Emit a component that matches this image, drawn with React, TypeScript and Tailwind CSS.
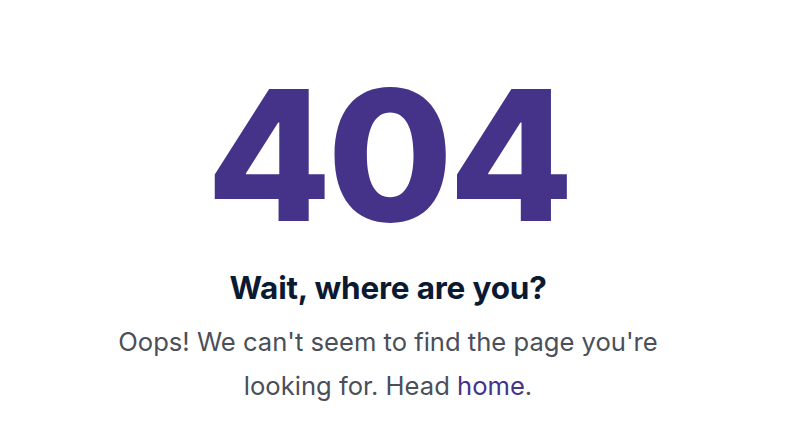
export default function App() {
  return (
    <div className="flex h-[433px] w-full flex-col items-center bg-white pr-3 font-['Inter',sans-serif]">
      <h1 className="mt-[55px] text-[182px] font-extrabold leading-[200px] tracking-[-4.5px] text-[#45338a]">
        404
      </h1>
      <h2 className="mt-[13px] text-[31.5px] font-bold leading-[40px] tracking-[-0.2px] text-[#0b1a33]">
        Wait, where are you?
      </h2>
      <p className="mt-[12px] max-w-[580px] text-center text-[25.6px] leading-[44px] text-[#4a4f5a]">
        Oops! We can't seem to find the page you're looking for. Head <a href="#" className="text-[#45338a]">home</a>.
      </p>
    </div>
  );
}
